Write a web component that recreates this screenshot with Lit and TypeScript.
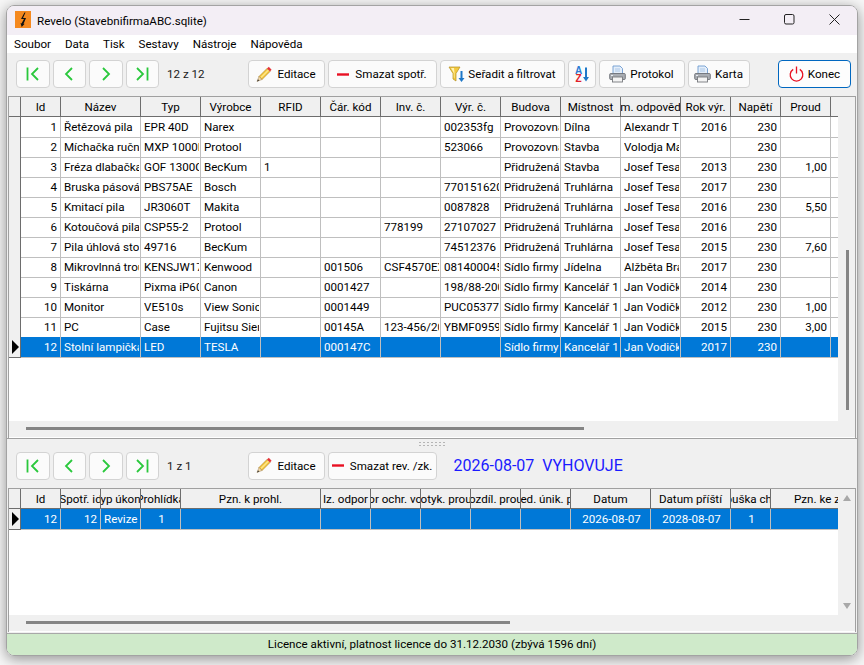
import { LitElement, css, html, nothing, svg } from "lit";
import { customElement, property } from "lit/decorators.js";

type Col = { t: string; w: number; right?: boolean; center?: boolean };

const upperCols: Col[] = [
  { t: "Id", w: 40, right: true },
  { t: "Název", w: 80 },
  { t: "Typ", w: 60 },
  { t: "Výrobce", w: 60 },
  { t: "RFID", w: 60 },
  { t: "Čár. kód", w: 60 },
  { t: "Inv. č.", w: 60 },
  { t: "Výr. č.", w: 60 },
  { t: "Budova", w: 60 },
  { t: "Místnost", w: 60 },
  { t: "Jm. odpovědn", w: 60 },
  { t: "Rok výr.", w: 50, right: true },
  { t: "Napětí", w: 50, right: true },
  { t: "Proud", w: 50, right: true },
  { t: "", w: 8 },
];

const upperRows: string[][] = [
  ["1", "Řetězová pila", "EPR 40D", "Narex", "", "", "", "002353fg", "Provozovna", "Dílna", "Alexandr Tichý", "2016", "230", "", ""],
  ["2", "Míchačka ruční", "MXP 1000E", "Protool", "", "", "", "523066", "Provozovna", "Stavba", "Volodja Mak", "", "230", "", ""],
  ["3", "Fréza dlabačka", "GOF 1300CE", "BecKum", "1", "", "", "", "Přidružená", "Stavba", "Josef Tesař", "2013", "230", "1,00", ""],
  ["4", "Bruska pásová", "PBS75AE", "Bosch", "", "", "", "770151620", "Přidružená", "Truhlárna", "Josef Tesař", "2017", "230", "", ""],
  ["5", "Kmitací pila", "JR3060T", "Makita", "", "", "", "0087828", "Přidružená", "Truhlárna", "Josef Tesař", "2016", "230", "5,50", ""],
  ["6", "Kotoučová pila", "CSP55-2", "Protool", "", "", "778199", "27107027", "Přidružená", "Truhlárna", "Josef Tesař", "2016", "230", "", ""],
  ["7", "Pila úhlová stolní", "49716", "BecKum", "", "", "", "74512376", "Přidružená", "Truhlárna", "Josef Tesař", "2015", "230", "7,60", ""],
  ["8", "Mikrovlnná trouba", "KENSJW17", "Kenwood", "", "001506", "CSF4570EX", "081400045", "Sídlo firmy", "Jídelna", "Alžběta Brá", "2017", "230", "", ""],
  ["9", "Tiskárna", "Pixma iP6000", "Canon", "", "0001427", "", "198/88-2005", "Sídlo firmy", "Kancelář 1", "Jan Vodička", "2014", "230", "", ""],
  ["10", "Monitor", "VE510s", "View Sonic", "", "0001449", "", "PUC053770", "Sídlo firmy", "Kancelář 1", "Jan Vodička", "2012", "230", "1,00", ""],
  ["11", "PC", "Case", "Fujitsu Siemens", "", "00145A", "123-456/2010", "YBMF0959", "Sídlo firmy", "Kancelář 1", "Jan Vodička", "2015", "230", "3,00", ""],
  ["12", "Stolní lampička", "LED", "TESLA", "", "000147C", "", "", "Sídlo firmy", "Kancelář 1", "Jan Vodička", "2017", "230", "", ""],
];

const lowerCols: Col[] = [
  { t: "Id", w: 40, right: true },
  { t: "Spotř. id", w: 40, right: true },
  { t: "Typ úkonu", w: 40 },
  { t: "Prohlídka", w: 40, center: true },
  { t: "Pzn. k prohl.", w: 140 },
  { t: "Iz. odpor", w: 50 },
  { t: "Odpor ochr. vodiče", w: 50 },
  { t: "Dotyk. proud", w: 50 },
  { t: "Rozdíl. proud", w: 50 },
  { t: "Jed. únik. pr", w: 50 },
  { t: "Datum", w: 80, center: true },
  { t: "Datum příští", w: 80, center: true },
  { t: "Zkouška chrán", w: 40, center: true },
  { t: "Pzn. ke zkoušce", w: 130 },
];

const lowerRows: string[][] = [
  ["12", "12", "Revize", "1", "", "", "", "", "", "", "2026-08-07", "2028-08-07", "1", ""],
];

const pencil = svg`<svg class="ico" width="16" height="17" viewBox="0 0 16 17">
  <polygon points="3,10.5 11,2.5 14,5.5 6,13.5" fill="#f5c73d" stroke="#a8791a" stroke-width=".6"/>
  <polygon points="4.5,11 12,3.5 13,4.5 5.5,12" fill="#fde68a"/>
  <polygon points="3,10.5 6,13.5 1,15.5" fill="#f2d9a8" stroke="#8a6a3a" stroke-width=".4"/>
  <polygon points="2,13.2 3.3,14.6 1,15.5" fill="#333"/>
  <polygon points="11,2.5 12.8,0.8 15.6,3.7 14,5.5" fill="#e5343a"/>
</svg>`;

const minus = svg`<svg class="ico" width="12" height="3" viewBox="0 0 12 3"><rect width="12" height="2.4" y=".3" fill="#e81123"/></svg>`;

const funnel = svg`<svg class="ico" width="18" height="18" viewBox="0 0 18 18">
  <polygon points="1,2 12,2 8,8.5 8,16 5,14 5,8.5" fill="#f3c93f" stroke="#b58f1f" stroke-width=".7"/>
  <polygon points="3,3 6,3 6.5,8 6.5,13 5.8,12.6 5.8,8" fill="#fff2b0"/>
  <path d="M13.5 6v9" stroke="#1f78c8" stroke-width="2"/>
  <polygon points="10.5,13 16.5,13 13.5,17" fill="#1f78c8"/>
</svg>`;

const sortAz = svg`<svg class="ico" width="16" height="17" viewBox="0 0 16 17">
  <text x="4.5" y="7.5" text-anchor="middle" class="az" fill="#2b7cd3">A</text>
  <text x="4.5" y="16" text-anchor="middle" class="az" fill="#e0202a">Z</text>
  <path d="M12 1.5v11" stroke="#1f78c8" stroke-width="2"/>
  <polygon points="9,11 15,11 12,15.5" fill="#1f78c8"/>
</svg>`;

const printer = svg`<svg class="ico" width="17" height="18" viewBox="0 0 17 18">
  <polygon points="4,1 11,1 13.5,3.5 13.5,9 4,9" fill="#e4eefa" stroke="#6d9bd0" stroke-width=".9"/>
  <path d="M6 4h5M6 6h5" stroke="#9dbde2" stroke-width=".8"/>
  <rect x=".7" y="8.5" width="15.6" height="6" rx="1" fill="#a9adb3" stroke="#6e7278" stroke-width=".9"/>
  <rect x="3.5" y="12" width="10" height="5" fill="#f4f4f4" stroke="#77797d" stroke-width=".9"/>
  <rect x="2" y="10" width="2" height="1" fill="#e9edf2"/>
</svg>`;

const power = svg`<svg class="ico" width="15" height="16" viewBox="0 0 15 16" fill="none" stroke="#e81123" stroke-width="1.3">
  <path d="M4.2 3.4a6.3 6.3 0 1 0 6.6 0"/>
  <path d="M7.5 .6v7"/>
</svg>`;

const navIcons = [
  svg`<svg width="14" height="14" viewBox="0 0 14 14" fill="none" stroke="#2ac83c" stroke-width="1.8"><path d="M1.5 0.5v13"/><path d="M12 1L6 7l6 6"/></svg>`,
  svg`<svg width="14" height="14" viewBox="0 0 14 14" fill="none" stroke="#2ac83c" stroke-width="1.8"><path d="M10 1L4 7l6 6"/></svg>`,
  svg`<svg width="14" height="14" viewBox="0 0 14 14" fill="none" stroke="#2ac83c" stroke-width="1.8"><path d="M4 1l6 6-6 6"/></svg>`,
  svg`<svg width="14" height="14" viewBox="0 0 14 14" fill="none" stroke="#2ac83c" stroke-width="1.8"><path d="M2 1l6 6-6 6"/><path d="M12.5 0.5v13"/></svg>`,
];

@customElement("data-grid")
export class DataGrid extends LitElement {
  static styles = css`
    :host {
      display: flex;
      flex-direction: column;
      min-height: 0;
      border-top: 1px solid #a0a0a0;
      border-left: 1px solid #a0a0a0;
      border-right: 1px solid #a0a0a0;
      margin: 0 1px 0 1px;
      background: #f0f0f0;
      font-size: var(--ui-size);
    }

    .top {
      flex: 1;
      display: flex;
      min-height: 0;
    }

    .body {
      flex: 1;
      min-width: 0;
      background: #fff;
      overflow: hidden;
    }

    .row {
      display: grid;
      height: 20px;
    }

    .cell {
      border-right: 1px solid #bfbfbf;
      border-bottom: 1px solid #bfbfbf;
      padding: 0 1px 0 3px;
      min-width: 0;
      line-height: 20px;
      color: #000;
    }

    .cell > div {
      overflow: hidden;
      white-space: nowrap;
    }

    .cell.right > div {
      text-align: right;
      padding-right: 2px;
    }

    .cell.center > div {
      text-align: center;
    }

    .head .cell {
      display: flex;
      justify-content: center;
      padding: 0 1px;
      background: #f0f0f0;
      border-right-color: #6d6d6d;
      border-bottom-color: #6d6d6d;
      overflow: hidden;
      white-space: nowrap;
    }

    .row-head {
      background: #f0f0f0;
      border-right: 1px solid #6d6d6d;
      border-bottom: 1px solid #bfbfbf;
      padding: 0;
      position: relative;
    }

    .head .row-head {
      border-bottom-color: #6d6d6d;
    }

    .row-head.current {
      border-bottom-color: #6d6d6d;
    }

    .row-head svg {
      position: absolute;
      left: 3px;
      top: 3px;
    }

    .row.sel .cell:not(.row-head) {
      background: #0078d7;
      color: #fff;
    }

    .vbar {
      width: 17px;
      flex: none;
      position: relative;
      background: #f0f0f0;
    }

    .thumb {
      position: absolute;
      left: 8px;
      width: 3px;
      background: #858585;
    }

    .arrow {
      position: absolute;
      left: 5px;
      width: 0;
      height: 0;
      border-left: 4px solid transparent;
      border-right: 4px solid transparent;
    }

    .arrow.up {
      top: 6px;
      border-bottom: 6px solid #a8a8a8;
    }

    .arrow.down {
      bottom: 6px;
      border-top: 6px solid #a8a8a8;
    }

    .hbar {
      flex: none;
      height: 16px;
      position: relative;
      border-bottom: 1px solid #fff;
      box-sizing: content-box;
    }

    .hthumb {
      position: absolute;
      left: 17px;
      top: 6px;
      height: 3px;
      background: #858585;
    }
  `;

  @property({ attribute: false }) cols: Col[] = [];
  @property({ attribute: false }) rows: string[][] = [];
  @property({ type: Number }) selected = 0;
  @property({ type: Number }) hthumb = 0;
  @property({ type: Number }) vtop = -1;
  @property({ type: Number }) vheight = 0;
  @property({ type: Boolean }) arrows = false;

  render() {
    const tpl = `12px ${this.cols.map((c) => c.w + "px").join(" ")}`;
    return html`
      <div class="top">
        <div class="body">
          <div class="row head" style="grid-template-columns:${tpl}">
            <div class="cell row-head"></div>
            ${this.cols.map((c) => html`<div class="cell"><span>${c.t}</span></div>`)}
          </div>
          ${this.rows.map((r, i) => {
            const sel = i === this.selected;
            return html`
              <div class="row ${sel ? "sel" : ""}" style="grid-template-columns:${tpl}">
                <div class="cell row-head ${sel ? "current" : ""}">
                  ${sel
                    ? svg`<svg width="7" height="14" viewBox="0 0 7 14"><polygon points="0,0 7,7 0,14" fill="#000"/></svg>`
                    : nothing}
                </div>
                ${r.map((v, j) => {
                  const c = this.cols[j];
                  return html`<div class="cell ${c.right ? "right" : ""} ${c.center ? "center" : ""}"><div>${v}</div></div>`;
                })}
              </div>
            `;
          })}
        </div>
        <div class="vbar">
          ${this.arrows ? html`<div class="arrow up"></div><div class="arrow down"></div>` : nothing}
          ${this.vtop >= 0 ? html`<div class="thumb" style="top:${this.vtop}px;height:${this.vheight}px"></div>` : nothing}
        </div>
      </div>
      <div class="hbar"><div class="hthumb" style="width:${this.hthumb}px"></div></div>
    `;
  }
}

@customElement("app-root")
export class AppRoot extends LitElement {
  static styles = css`
    :host {
      display: block;
      --ui-size: 11.6px;
      font-family: Roboto, "Noto Sans", sans-serif;
      font-size: var(--ui-size);
      color: #000;
    }

    .desk {
      width: 864px;
      height: 665px;
      box-sizing: border-box;
      padding: 5px 6px 9px 6px;
      background: #f7f7f7;
      overflow: hidden;
    }

    .window {
      height: 651px;
      box-sizing: border-box;
      display: flex;
      flex-direction: column;
      border: 1px solid #a3a3a3;
      border-radius: 8px;
      overflow: hidden;
      background: #f0f0f0;
    }

    .frame {
      height: 651px;
      border-radius: 8px;
      box-shadow: 0 3px 14px rgba(0, 0, 0, 0.42);
    }

    .title {
      flex: none;
      height: 29px;
      display: flex;
      align-items: center;
      background: #f3eef5;
      padding-left: 8px;
    }

    .app-icon {
      width: 16px;
      height: 17px;
      margin: 0 6px 2px 0;
    }

    .controls {
      margin-left: auto;
      display: flex;
      align-items: center;
      gap: 34px;
      padding: 0 17px 2px 0;
    }

    .menu {
      flex: none;
      height: 18px;
      display: flex;
      align-items: center;
      gap: 14px;
      background: #fff;
      padding-left: 7px;
    }

    .toolbar {
      flex: none;
      height: 43px;
      display: flex;
      align-items: flex-start;
      padding: 7px 0 0 9px;
      gap: 3px;
      box-sizing: border-box;
    }

    .toolbar.lower {
      height: 50px;
      padding-top: 13px;
      position: relative;
      border-top: 1px solid #a0a0a0;
    }

    button {
      height: 28px;
      box-sizing: border-box;
      display: inline-flex;
      align-items: center;
      justify-content: center;
      gap: 4px;
      padding: 0;
      border: 1px solid #d3d3d3;
      border-radius: 4px;
      background: #fbfbfb;
      color: #000;
      font: inherit;
    }

    button.nav {
      width: 33.5px;
    }

    button.edit {
      width: 77px;
      gap: 5px;
    }

    button.del {
      width: 109px;
      gap: 6px;
    }

    button.sort {
      width: 125px;
      gap: 2px;
    }

    button.az {
      width: 28px;
    }

    button.protokol {
      width: 86px;
    }

    button.karta {
      width: 62px;
    }

    button.konec {
      width: 73px;
      margin-left: auto;
      margin-right: 6px;
      border-color: #0067c0;
      background: #fdfdfd;
    }

    .count {
      width: 82.5px;
      padding-left: 5px;
      box-sizing: border-box;
      line-height: 28px;
      color: #1a1a1a;
    }

    .status-text {
      margin-left: 14px;
      font-size: 16px;
      line-height: 28px;
      color: #1a1aff;
      white-space: pre;
    }

    .dots {
      position: absolute;
      top: 2px;
      left: 411px;
      width: 28px;
      height: 5px;
      background-image: radial-gradient(circle, #b5b5b5 0.8px, transparent 1px);
      background-size: 4px 3px;
    }

    data-grid.upper {
      height: 342px;
    }

    data-grid.lower {
      height: 144px;
    }

    .license {
      flex: none;
      height: 22px;
      margin-top: 1px;
      border-top: 1px solid #a8a8a8;
      box-sizing: border-box;
      background: #cfeaca;
      text-align: center;
      line-height: 21px;
    }

    .az {
      font: 700 10px "Liberation Sans", sans-serif;
    }

    .ico {
      flex: none;
    }
  `;

  private navButtons() {
    return navIcons.map((i) => html`<button class="nav">${i}</button>`);
  }

  render() {
    return html`
      <div class="desk">
        <div class="frame">
          <div class="window">
            <div class="title">
              <svg class="app-icon" viewBox="0 0 16 17">
                <rect width="16" height="17" fill="#f5891f" />
                <path d="M9.5 1.5L6 8h3L6.5 12.5l-1-.5 1.2 4 3-3.2-1.2.2L11 7H8l2.5-5.5z" fill="#111" />
              </svg>
              <span>Revelo (StavebnifirmaABC.sqlite)</span>
              <div class="controls">
                <svg width="11" height="11" viewBox="0 0 11 11"><path d="M0.5 5.5h10" stroke="#222" stroke-width="1" /></svg>
                <svg width="11" height="11" viewBox="0 0 11 11" fill="none"><rect x=".5" y=".5" width="9.5" height="9.5" rx="1.5" stroke="#222" /></svg>
                <svg width="11" height="11" viewBox="0 0 11 11" fill="none" stroke="#222"><path d="M.5.5l10 10M10.5.5l-10 10" /></svg>
              </div>
            </div>
            <div class="menu">
              <span>Soubor</span><span>Data</span><span>Tisk</span><span>Sestavy</span><span>Nástroje</span><span>Nápověda</span>
            </div>
            <div class="toolbar">
              ${this.navButtons()}
              <span class="count">12 z 12</span>
              <button class="edit">${pencil}Editace</button>
              <button class="del">${minus}Smazat spotř.</button>
              <button class="sort">${funnel}Seřadit a filtrovat</button>
              <button class="az">${sortAz}</button>
              <button class="protokol">${printer}Protokol</button>
              <button class="karta">${printer}Karta</button>
              <button class="konec">${power}Konec</button>
            </div>
            <data-grid
              class="upper"
              .cols=${upperCols}
              .rows=${upperRows}
              .selected=${11}
              .hthumb=${558}
              .vtop=${153}
              .vheight=${160}
            ></data-grid>
            <div class="toolbar lower">
              <div class="dots"></div>
              ${this.navButtons()}
              <span class="count">1 z 1</span>
              <button class="edit">${pencil}Editace</button>
              <button class="del">${minus}Smazat rev. /zk.</button>
              <span class="status-text">2026-08-07  VYHOVUJE</span>
            </div>
            <data-grid
              class="lower"
              .cols=${lowerCols}
              .rows=${lowerRows}
              .selected=${0}
              .hthumb=${484}
              .arrows=${true}
            ></data-grid>
            <div class="license">Licence aktivní, platnost licence do 31.12.2030 (zbývá 1596 dní)</div>
          </div>
        </div>
      </div>
    `;
  }
}

declare global {
  interface HTMLElementTagNameMap {
    "app-root": AppRoot;
    "data-grid": DataGrid;
  }
}
